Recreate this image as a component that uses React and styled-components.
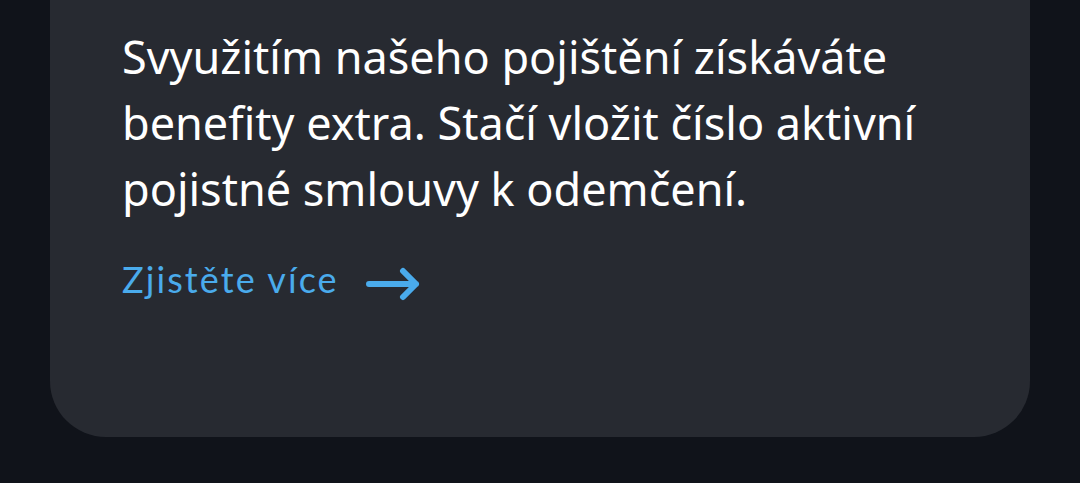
import React from "react";
import styled, { createGlobalStyle } from "styled-components";

const Global = createGlobalStyle`
  html, body {
    margin: 0;
    padding: 0;
    background: #10131a;
    height: 100%;
    overflow: hidden;
  }
  #root { height: 100%; }
`;

const Page = styled.div`
  height: 483px;
  box-sizing: border-box;
  padding: 0 50px 46px;
  display: flex;
  flex-direction: column;
  background: #10131a;
`;

const Card = styled.section`
  flex: 1;
  background: #272a31;
  border-radius: 0 0 56px 56px;
  padding: 24px 72px 0;
  display: flex;
  flex-direction: column;
  align-items: flex-start;
`;

const Body = styled.p`
  margin: 0;
  max-width: 836px;
  font-family: "Noto Sans", "Open Sans", sans-serif;
  font-size: 45px;
  line-height: 66px;
  color: #ffffff;
`;

const Link = styled.a`
  margin-top: 35px;
  display: flex;
  align-items: center;
  gap: 27px;
  font-family: Lato, "Noto Sans", sans-serif;
  font-size: 36px;
  line-height: 40px;
  letter-spacing: 2.1px;
  color: #4aabec;
  text-decoration: none;
`;

const ArrowIcon = styled.svg`
  flex: none;
  margin-top: 10px;
`;

const Arrow = () => (
  <ArrowIcon width="54" height="34" viewBox="0 0 54 34" fill="none">
    <path
      d="M3 17 H50 M37 4 L50 17 L37 30"
      stroke="#4aabec"
      strokeWidth="6"
      strokeLinecap="round"
      strokeLinejoin="round"
    />
  </ArrowIcon>
);

export default function App() {
  return (
    <>
      <Global />
      <Page>
        <Card>
          <Body>
            Svyužitím našeho pojištění získáváte benefity extra. Stačí vložit
            číslo aktivní pojistné smlouvy k odemčení.
          </Body>
          <Link href="#">
            Zjistěte více
            <Arrow />
          </Link>
        </Card>
      </Page>
    </>
  );
}
